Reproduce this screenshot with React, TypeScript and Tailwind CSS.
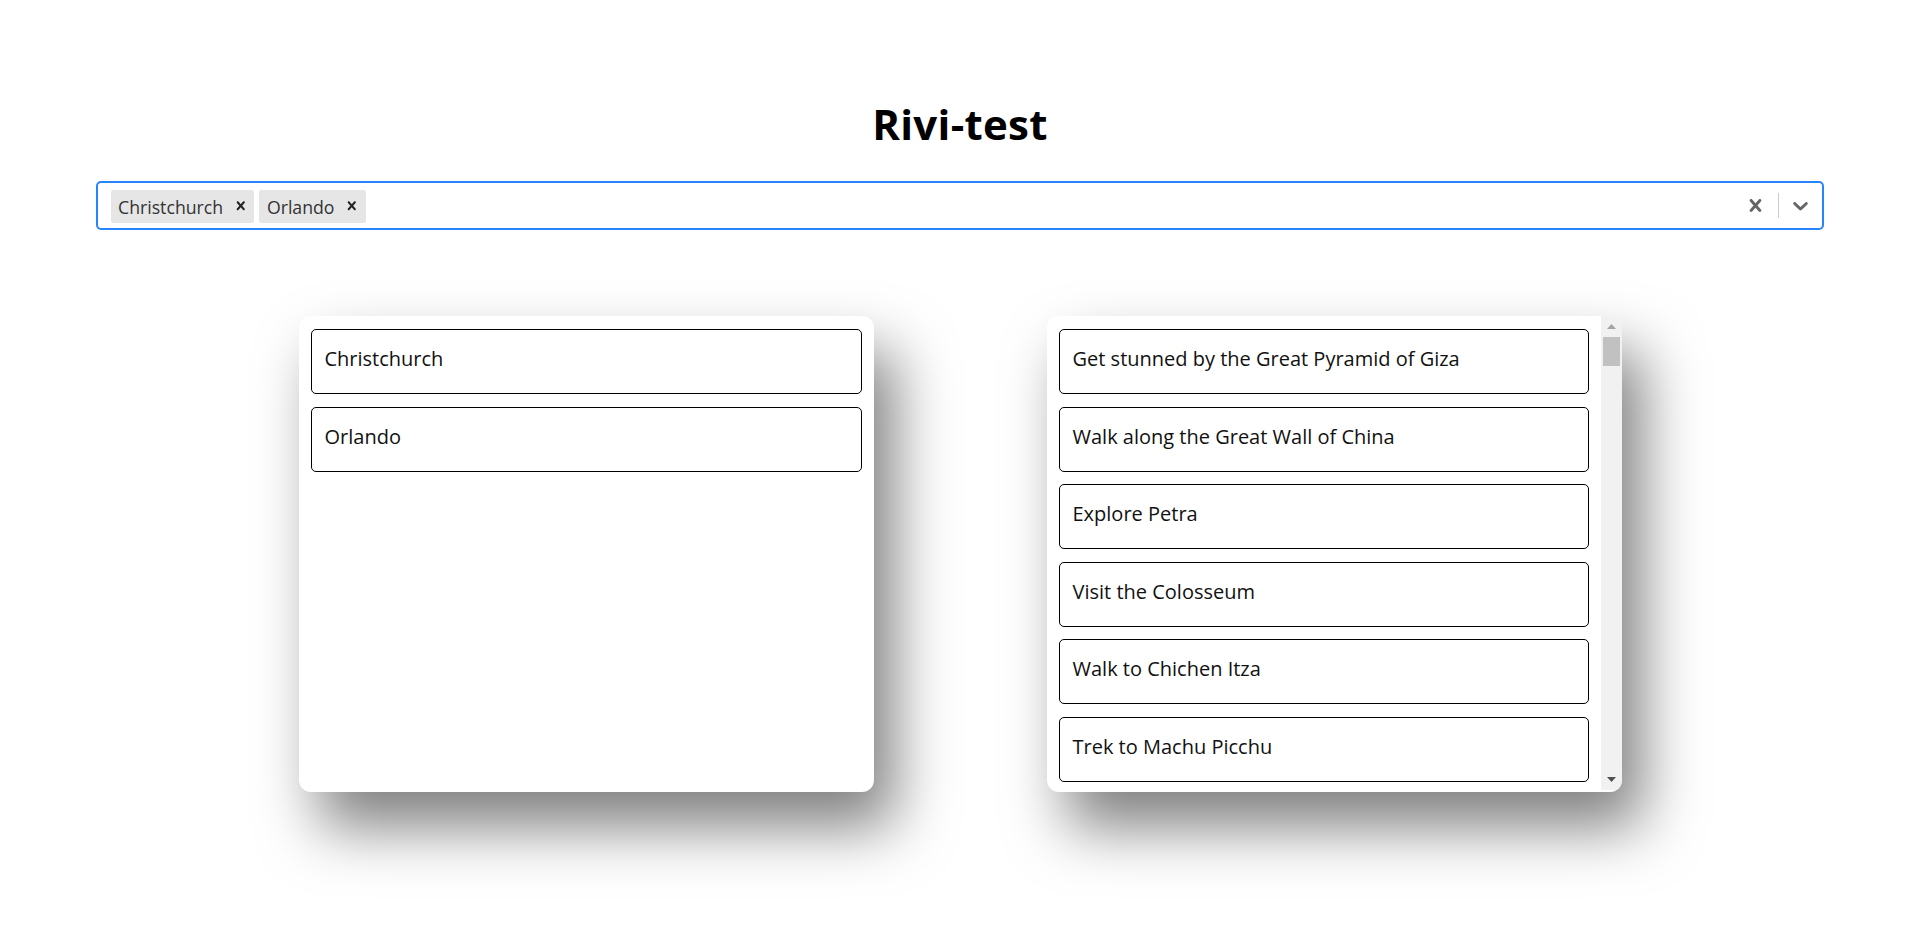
import React from 'react';

const selected = ['Christchurch', 'Orlando'];

const bucketList = [
  'Get stunned by the Great Pyramid of Giza',
  'Walk along the Great Wall of China',
  'Explore Petra',
  'Visit the Colosseum',
  'Walk to Chichen Itza',
  'Trek to Machu Picchu',
];

const CrossIcon = ({ size }: { size: number }) => (
  <svg width={size} height={size} viewBox="0 0 20 20" fill="currentColor" aria-hidden="true">
    <path d="M14.348 14.849c-0.469 0.469-1.229 0.469-1.697 0l-2.651-3.030-2.651 3.029c-0.469 0.469-1.229 0.469-1.697 0-0.469-0.469-0.469-1.229 0-1.697l2.758-3.15-2.759-3.152c-0.469-0.469-0.469-1.228 0-1.697s1.228-0.469 1.697 0l2.652 3.031 2.651-3.031c0.469-0.469 1.228-0.469 1.697 0s0.469 1.229 0 1.697l-2.758 3.152 2.758 3.15c0.469 0.469 0.469 1.229 0 1.698z" />
  </svg>
);

const ChevronIcon = () => (
  <svg width={25} height={25} viewBox="0 0 20 20" fill="currentColor" aria-hidden="true">
    <path d="M4.516 7.548c0.436-0.446 1.043-0.481 1.576 0l3.908 3.747 3.908-3.747c0.533-0.481 1.141-0.446 1.574 0 0.436 0.445 0.408 1.197 0 1.615-0.406 0.418-4.695 4.502-4.695 4.502-0.217 0.223-0.502 0.335-0.787 0.335s-0.57-0.112-0.789-0.335c0 0-4.287-4.084-4.695-4.502s-0.436-1.17 0-1.615z" />
  </svg>
);

function Card({ text }: { text: string }) {
  return (
    <div className="shrink-0 rounded-[5px] border border-black pl-[13px] pr-[13px] pt-[16px] pb-[22px] text-[20px] leading-[25px] text-[#111]">
      {text}
    </div>
  );
}

export default function App() {
  return (
    <div className="min-h-screen w-full bg-white pt-[99px] font-['Open_Sans',sans-serif]">
      {/* Title */}
      <h1 className="h-[49px] text-center text-[42px] font-bold leading-[49px] tracking-[0.3px] text-black">Rivi-test</h1>

      {/* Multi select */}
      <div className="mx-auto mt-[33px] flex h-[49px] w-[90%] items-center rounded-[5px] border-2 border-[#2684FF] bg-white">
        <div className="flex flex-1 items-center px-[10px] pt-[1px]">
          {selected.map((city) => (
            <div key={city} className="mx-[2.5px] flex h-[33px] items-stretch rounded-[2.5px] bg-[#e6e6e6]">
              <span className="pl-[7.5px] pr-[3.75px] pt-[2px] text-[17.7px] leading-[31px] text-[#333]">{city}</span>
              <span className="flex items-center px-[5px] text-[#222]">
                <CrossIcon size={17.5} />
              </span>
            </div>
          ))}
        </div>
        <div className="flex h-full items-center">
          <div className="flex w-[45px] items-center justify-center text-[#666]">
            <CrossIcon size={25} />
          </div>
          <span className="h-[25px] w-px bg-[#ccc]" />
          <div className="flex w-[43px] items-center justify-center text-[#666]">
            <ChevronIcon />
          </div>
        </div>
      </div>

      {/* Lists */}
      <div className="mt-[86px] flex justify-center gap-[173px]">
        <div className="flex h-[476px] w-[575px] flex-col gap-[12.6px] rounded-[12px] bg-white px-[12px] pt-[13px] shadow-[20px_35px_60px_rgba(0,0,0,0.5)]">
          {selected.map((city) => (
            <Card key={city} text={city} />
          ))}
        </div>

        <div className="flex h-[476px] w-[575px] overflow-hidden rounded-[12px] bg-white shadow-[20px_35px_60px_rgba(0,0,0,0.5)]">
          <div className="flex flex-1 flex-col gap-[12.6px] overflow-hidden px-[12px] pt-[13px]">
            {bucketList.map((item) => (
              <Card key={item} text={item} />
            ))}
          </div>
          {/* scrollbar */}
          <div className="mb-[2px] flex w-[21px] flex-col bg-[#f1f1f1]">
            <div className="flex h-[21px] items-center justify-center">
              <svg width="9" height="5" viewBox="0 0 9 5">
                <polygon points="0,5 4.5,0 9,5" fill="#a3a3a3" />
              </svg>
            </div>
            <div className="mx-[2px] h-[29px] bg-[#c1c1c1]" />
            <div className="flex-1" />
            <div className="flex h-[21px] items-center justify-center">
              <svg width="9" height="5" viewBox="0 0 9 5">
                <polygon points="0,0 9,0 4.5,5" fill="#505050" />
              </svg>
            </div>
          </div>
        </div>
      </div>
    </div>
  );
}
